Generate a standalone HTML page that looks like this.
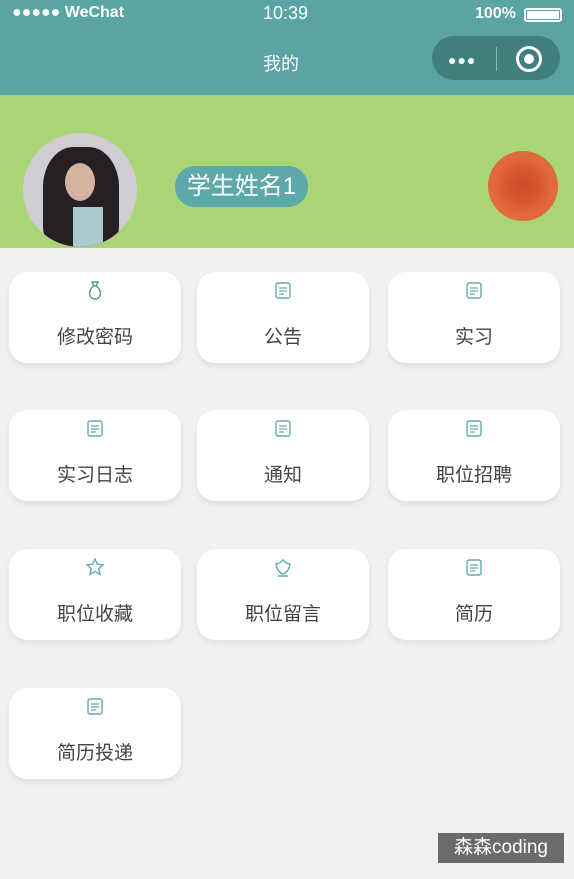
<!DOCTYPE html>
<html><head><meta charset="utf-8"><style>
*{margin:0;padding:0;box-sizing:border-box}
body{width:574px;height:879px;overflow:hidden;background:#f1f0f2;font-family:"Liberation Sans","Noto Sans CJK SC",sans-serif;position:relative}
.top{position:absolute;left:0;top:0;width:574px;height:95px;background:#5aa4a4;color:#fff}
.green{position:absolute;left:0;top:95px;width:574px;height:153px;background:#a9d577}
.card{position:absolute;width:172px;height:91px;background:#fff;border-radius:18px;box-shadow:0 3px 6px rgba(0,0,0,0.08);text-align:center}
.card .t{position:absolute;left:0;right:0;top:50px;font-size:19px;color:#444}
.card svg{position:absolute;left:50%;top:8px;margin-left:-10px}
</style></head><body>
<div class="top">
<div style="position:absolute;left:12px;top:4px;font-size:16px;font-weight:bold">●●●●● WeChat</div>
<div style="position:absolute;left:263px;top:3px;font-size:18px">10:39</div>
<div style="position:absolute;left:475px;top:5px;font-size:16px;font-weight:bold">100%</div>
<div style="position:absolute;left:524px;top:8px;width:38px;height:14px;border:2px solid #fff;border-radius:3px;padding:1px"><div style="background:#fff;width:100%;height:100%"></div></div>
<div style="position:absolute;left:263px;top:50px;font-size:18px">我的</div>
<div style="position:absolute;left:432px;top:36px;width:128px;height:44px;border-radius:22px;background:#3f7f7d"></div>
<div style="position:absolute;left:448px;top:52px;font-size:14px;letter-spacing:1px">●●●</div>
<div style="position:absolute;left:496px;top:47px;width:1px;height:24px;background:#8bb"></div>
<div style="position:absolute;left:516px;top:46px;width:26px;height:26px;border:3px solid #fff;border-radius:50%"><div style="margin:5px;width:10px;height:10px;border-radius:50%;background:#fff"></div></div>
</div>
<div class="green">
<div style="position:absolute;left:23px;top:38px;width:114px;height:114px;border-radius:50%;overflow:hidden;background:#d0cdd2">
<div style="position:absolute;left:20px;top:14px;width:76px;height:100px;border-radius:40% 40% 20% 20%;background:#262024"></div>
<div style="position:absolute;left:42px;top:30px;width:30px;height:38px;border-radius:50%;background:#d6b2a0"></div>
<div style="position:absolute;left:50px;top:74px;width:30px;height:40px;background:#a9c9cf"></div>
</div>
<div style="position:absolute;left:175px;top:71px;width:133px;height:41px;border-radius:20px;background:#5da8a8;color:#fff;font-size:24px;line-height:41px;text-align:center">学生姓名1</div>
<div style="position:absolute;left:488px;top:56px;width:70px;height:70px;border-radius:50%;background:radial-gradient(circle at 50% 50%,#cc4a2e 0,#d8552f 30%,#e16a3b 60%)"></div>
</div>
<div class="card" style="left:9px;top:272px"><svg width="20" height="22" viewBox="0 0 20 22"><path d="M7 2h6l-2 4h-2zM9 6C3 9 3 19 10 19s7-10 1-13" fill="none" stroke="#5a9a9a" stroke-width="1.5"/></svg><div class="t">修改密码</div></div>
<div class="card" style="left:197px;top:272px"><svg width="20" height="22" viewBox="0 0 20 22"><rect x="3" y="3" width="14" height="15" rx="2" fill="none" stroke="#6aa" stroke-width="1.4"/><path d="M6 8h8M6 11h8M6 14h5" stroke="#6aa" stroke-width="1.2"/></svg><div class="t">公告</div></div>
<div class="card" style="left:388px;top:272px"><svg width="20" height="22" viewBox="0 0 20 22"><rect x="3" y="3" width="14" height="15" rx="2" fill="none" stroke="#6aa" stroke-width="1.4"/><path d="M6 8h8M6 11h8M6 14h5" stroke="#6aa" stroke-width="1.2"/></svg><div class="t">实习</div></div>
<div class="card" style="left:9px;top:410px"><svg width="20" height="22" viewBox="0 0 20 22"><rect x="3" y="3" width="14" height="15" rx="2" fill="none" stroke="#6aa" stroke-width="1.4"/><path d="M6 8h8M6 11h8M6 14h5" stroke="#6aa" stroke-width="1.2"/></svg><div class="t">实习日志</div></div>
<div class="card" style="left:197px;top:410px"><svg width="20" height="22" viewBox="0 0 20 22"><rect x="3" y="3" width="14" height="15" rx="2" fill="none" stroke="#6aa" stroke-width="1.4"/><path d="M6 8h8M6 11h8M6 14h5" stroke="#6aa" stroke-width="1.2"/></svg><div class="t">通知</div></div>
<div class="card" style="left:388px;top:410px"><svg width="20" height="22" viewBox="0 0 20 22"><rect x="3" y="3" width="14" height="15" rx="2" fill="none" stroke="#6aa" stroke-width="1.4"/><path d="M6 8h8M6 11h8M6 14h5" stroke="#6aa" stroke-width="1.2"/></svg><div class="t">职位招聘</div></div>
<div class="card" style="left:9px;top:549px"><svg width="20" height="22" viewBox="0 0 20 22"><path d="M10 2l2.4 5.2 5.6.6-4.2 3.8 1.2 5.6L10 14.4 5 17.2l1.2-5.6L2 7.8l5.6-.6z" fill="none" stroke="#6aa" stroke-width="1.4"/></svg><div class="t">职位收藏</div></div>
<div class="card" style="left:197px;top:549px"><svg width="20" height="22" viewBox="0 0 20 22"><path d="M3 7c3 0 5-2 7-4 2 2 4 4 7 4-1 6-4 9-7 10-3-1-6-4-7-10zM5 19h10" fill="none" stroke="#6aa" stroke-width="1.4"/></svg><div class="t">职位留言</div></div>
<div class="card" style="left:388px;top:549px"><svg width="20" height="22" viewBox="0 0 20 22"><rect x="3" y="3" width="14" height="15" rx="2" fill="none" stroke="#6aa" stroke-width="1.4"/><path d="M6 8h8M6 11h8M6 14h5" stroke="#6aa" stroke-width="1.2"/></svg><div class="t">简历</div></div>
<div class="card" style="left:9px;top:688px"><svg width="20" height="22" viewBox="0 0 20 22"><rect x="3" y="3" width="14" height="15" rx="2" fill="none" stroke="#6aa" stroke-width="1.4"/><path d="M6 8h8M6 11h8M6 14h5" stroke="#6aa" stroke-width="1.2"/></svg><div class="t">简历投递</div></div>
<div style="position:absolute;left:438px;top:833px;width:126px;height:30px;background:#6b6b6b;color:#fff;font-size:19px;line-height:30px;text-align:center">森森coding</div>
</body></html>
